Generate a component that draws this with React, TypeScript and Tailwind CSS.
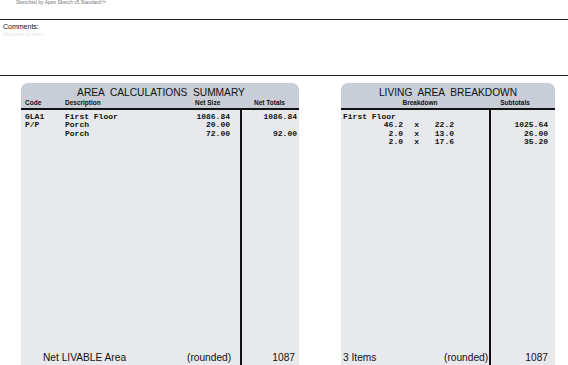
import React from "react";

const mono = "font-['Liberation_Mono','Courier_New',monospace] font-bold text-[8px] leading-[8.3px] text-[#111]";
const sans = "font-['Liberation_Sans',Arial,sans-serif]";

function LeftPanel() {
  return (
    <div className="w-[278px] h-[282px] shrink-0 flex flex-col rounded-t-[7px] bg-[#e8e9ec] overflow-hidden">
      <div className="h-[27px] shrink-0 bg-[#c8cdd6] flex flex-col border-b-2 border-[#111]">
        <div className={`${sans} text-[10.2px] leading-[11px] text-[#111] text-center pt-[4px] pl-[2px] whitespace-pre`}>
          AREA  CALCULATIONS  SUMMARY
        </div>
        <div className={`${sans} font-bold text-[6.5px] leading-[8px] text-[#111] flex pt-[1px]`}>
          <span className="w-[44px] pl-[4px]">Code</span>
          <span className="w-[130px]">Description</span>
          <span className="w-[47px]">Net Size</span>
          <span className="flex-1 pl-[12px]">Net Totals</span>
        </div>
      </div>
      <div className="flex-1 flex">
        <div className="w-[221px] border-r-2 border-[#111] flex flex-col justify-between">
          <div className={`${mono} pt-[3px] flex`}>
            <div className="w-[44px] pl-[4px] flex flex-col">
              <span>GLA1</span>
              <span>P/P</span>
            </div>
            <div className="w-[90px] flex flex-col">
              <span>First Floor</span>
              <span>Porch</span>
              <span>Porch</span>
            </div>
            <div className="w-[75px] flex flex-col items-end">
              <span>1086.84</span>
              <span>20.00</span>
              <span>72.00</span>
            </div>
          </div>
          <div className={`${sans} text-[10.2px] leading-[12px] text-[#111] flex pb-[1px]`}>
            <span className="pl-[22px] w-[166px]">Net LIVABLE Area</span>
            <span>(rounded)</span>
          </div>
        </div>
        <div className="flex-1 flex flex-col justify-between">
          <div className={`${mono} pt-[3px] pr-[2px] flex flex-col items-end`}>
            <span>1086.84</span>
            <span>&nbsp;</span>
            <span>92.00</span>
          </div>
          <div className={`${sans} text-[10.2px] leading-[12px] text-[#111] text-right pr-[4px] pb-[1px]`}>
            1087
          </div>
        </div>
      </div>
    </div>
  );
}

function RightPanel() {
  const rows = [
    ["46.2", "22.2", "1025.64"],
    ["2.0", "13.0", "26.00"],
    ["2.0", "17.6", "35.20"],
  ];
  return (
    <div className="w-[214px] h-[282px] shrink-0 flex flex-col rounded-t-[7px] bg-[#e8e9ec] overflow-hidden">
      <div className="h-[27px] shrink-0 bg-[#c8cdd6] flex flex-col border-b-2 border-[#111]">
        <div className={`${sans} text-[10.2px] leading-[11px] text-[#111] text-center pt-[4px] whitespace-pre`}>
          LIVING  AREA  BREAKDOWN
        </div>
        <div className={`${sans} font-bold text-[6.5px] leading-[8px] text-[#111] flex pt-[1px]`}>
          <span className="w-[150px] text-center pl-[8px]">Breakdown</span>
          <span className="flex-1 text-center pr-[16px]">Subtotals</span>
        </div>
      </div>
      <div className="flex-1 flex">
        <div className="w-[150px] border-r-2 border-[#111] flex flex-col justify-between">
          <div className={`${mono} pt-[3px] pl-[2px] flex flex-col`}>
            <span>First Floor</span>
            {rows.map((r, i) => (
              <div key={i} className="flex">
                <span className="w-[60px] text-right">{r[0]}</span>
                <span className="w-[16px] text-right">x</span>
                <span className="w-[35px] text-right">{r[1]}</span>
              </div>
            ))}
          </div>
          <div className={`${sans} text-[10.2px] leading-[12px] text-[#111] flex pb-[1px]`}>
            <span className="pl-[2px] w-[103px]">3 Items</span>
            <span>(rounded)</span>
          </div>
        </div>
        <div className="flex-1 flex flex-col justify-between">
          <div className={`${mono} pt-[3px] pr-[7px] flex flex-col items-end`}>
            <span>&nbsp;</span>
            {rows.map((r, i) => (
              <span key={i}>{r[2]}</span>
            ))}
          </div>
          <div className={`${sans} text-[10.2px] leading-[12px] text-[#111] text-right pr-[7px] pb-[1px]`}>
            1087
          </div>
        </div>
      </div>
    </div>
  );
}

export default function App() {
  return (
    <div className="w-[568px] h-[365px] bg-white overflow-hidden flex flex-col">
      <div className="h-[19px] shrink-0">
        <div className={`${sans} text-[5px] leading-[5px] text-[#777] pl-[16px]`}>
          Sketched by Apex Sketch v5 Standard™
        </div>
      </div>
      <div className="h-[57px] shrink-0 border-t border-b border-[#222] flex flex-col">
        <div className={`${sans} text-[7px] leading-[8px] text-[#111] pl-[3px] pt-[3px]`}>Comments:</div>
        <div className={`${sans} text-[5px] leading-[6px] text-[#e6e6e6] pl-[3px]`}>Sketched by Apex</div>
      </div>
      <div className="flex shrink-0 pt-[7px] pl-[21px] gap-[42px]">
        <LeftPanel />
        <RightPanel />
      </div>
    </div>
  );
}
